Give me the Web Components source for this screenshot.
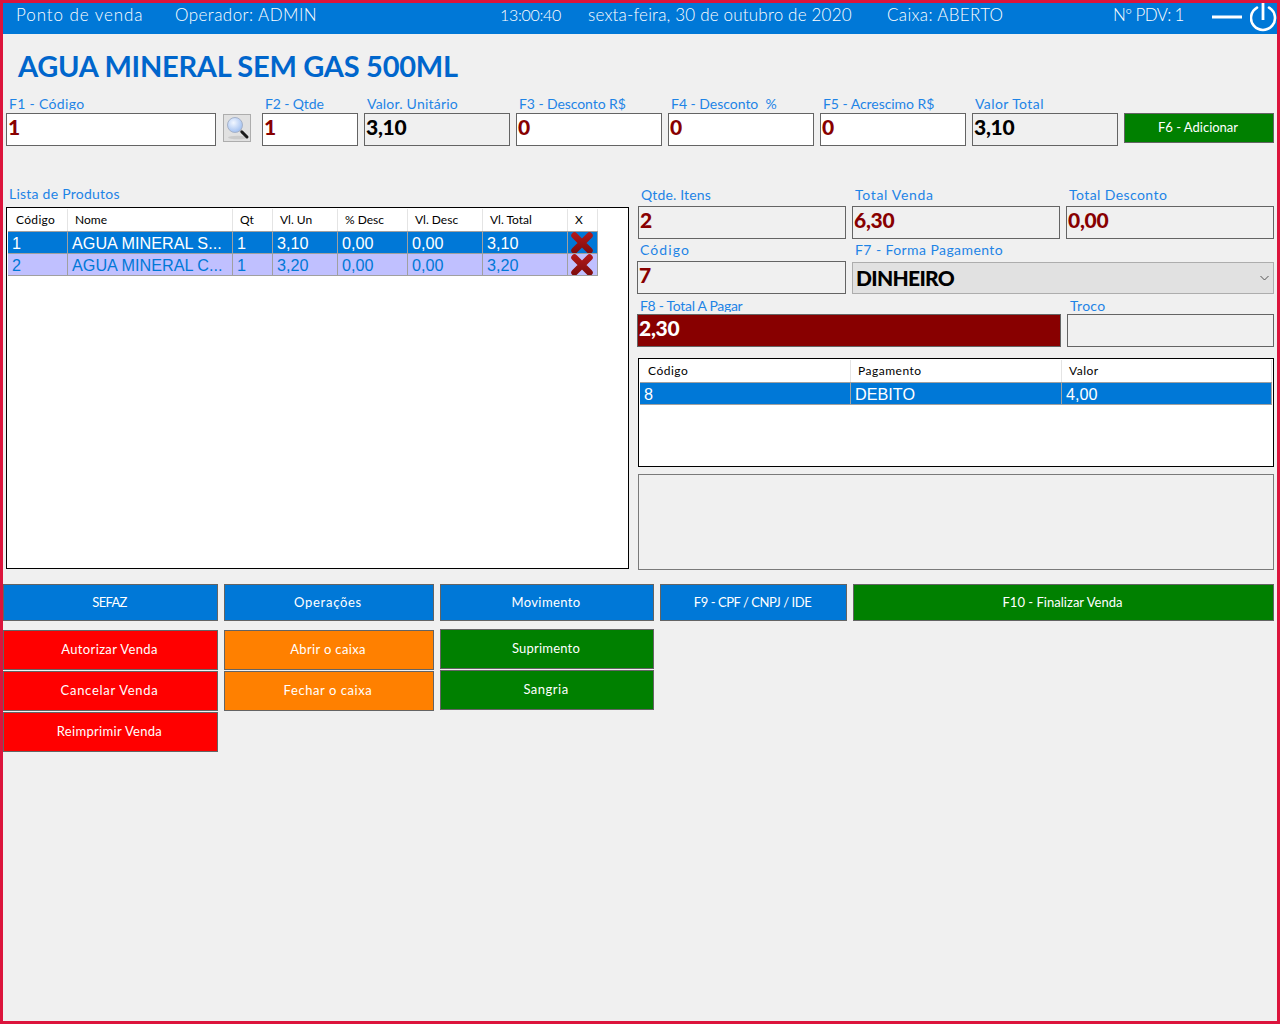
<!DOCTYPE html>
<html lang="pt-BR"><head><meta charset="utf-8"><title>Ponto de venda</title>
<style>
html,body{margin:0;padding:0;background:#fff}
body{font-family:"Lato","Liberation Sans",sans-serif}
</style></head><body>
<pos-app>
  <pos-header slot="header"></pos-header>
  <pos-title>AGUA MINERAL SEM GAS 500ML</pos-title>
  <pos-inputs>
    <pos-field label="F1 - Código" value="1" ls=".33" clip style="width:210px"></pos-field>
    <pos-search></pos-search>
    <pos-field label="F2 - Qtde" value="1" ls="-.13" style="width:96px"></pos-field>
    <pos-field label="Valor. Unitário" value="3,10" ls=".22" tone="ro-black" style="width:146px"></pos-field>
    <pos-field label="F3 - Desconto R$" value="0" ls="-.08" style="width:146px"></pos-field>
    <pos-field label="F4 - Desconto  %" value="0" ls="-.02" style="width:146px"></pos-field>
    <pos-field label="F5 - Acrescimo R$" value="0" ls="-.05" style="width:146px"></pos-field>
    <pos-field label="Valor Total" value="3,10" tone="ro-black" style="width:146px"></pos-field>
    <pos-btn color="#008000" ls="0" style="width:150px;height:30px;margin-top:16px">F6 - Adicionar</pos-btn>
  </pos-inputs>
  <pos-columns>
    <pos-left slot="left">
      <pos-grid cols="60px 165px 40px 65px 70px 75px 85px 30px" rowwidth="590px" style="height:362px;--hls:0px;--h1ls:.33px">
        <pos-row kind="head" cells="Código|Nome|Qt|Vl. Un|% Desc|Vl. Desc|Vl. Total|X"></pos-row>
        <pos-row kind="sel" cells="1|AGUA MINERAL S...|1|3,10|0,00|0,00|3,10|"><pos-x></pos-x></pos-row>
        <pos-row kind="alt" cells="2|AGUA MINERAL C...|1|3,20|0,00|0,00|3,20|"><pos-x></pos-x></pos-row>
      </pos-grid>
    </pos-left>
    <pos-right slot="right">
      <pos-trio>
        <pos-field label="Qtde. Itens" value="2" ls=".15" tone="ro" lh="18"></pos-field>
        <pos-field label="Total Venda" value="6,30" ls=".69" tone="ro" lh="18"></pos-field>
        <pos-field label="Total Desconto" value="0,00" tone="ro" lh="18"></pos-field>
      </pos-trio>
      <pos-pay>
        <pos-field label="Código" value="7" ls="1.09" tone="ro" lh="18" style="width:209px;margin-left:-1px"></pos-field>
        <pos-select label="F7 - Forma Pagamento" value="DINHEIRO"></pos-select>
      </pos-pay>
      <pos-due>
        <pos-field label="F8 - Total A Pagar" value="2,30" ls="-.3" tone="dark" lh="15" clip style="width:424px;margin-left:-1px"></pos-field>
        <pos-field label="Troco" value="" ls=".3" tone="ro" lh="15" style="width:207px"></pos-field>
      </pos-due>
      <pos-grid cols="211px 211px 1fr" rowwidth="100%" style="height:109px;margin-top:11px;--hls:.5px;--h1ls:.5px">
        <pos-row kind="head" cells="Código|Pagamento|Valor"></pos-row>
        <pos-row kind="sel" cells="8|DEBITO|4,00"></pos-row>
      </pos-grid>
      <pos-panel></pos-panel>
    </pos-right>
  </pos-columns>
  <pos-actions>
    <pos-btn color="#0078d7" ls="-.7" style="width:215px">SEFAZ</pos-btn>
    <pos-btn color="#0078d7" ls=".72" style="width:210px">Operações</pos-btn>
    <pos-btn color="#0078d7" ls=".4" style="width:214px">Movimento</pos-btn>
    <pos-btn color="#0078d7" ls="-.45" style="width:187px">F9 - CPF / CNPJ / IDE</pos-btn>
    <pos-btn color="#008000" ls=".02" style="width:421px">F10 - Finalizar Venda</pos-btn>
  </pos-actions>
  <pos-stacks>
    <pos-stack style="width:215px;padding-top:1px">
      <pos-btn color="#ff0000" ls=".37" style="height:40px">Autorizar Venda</pos-btn>
      <pos-btn color="#ff0000" ls=".71" style="height:40px">Cancelar Venda</pos-btn>
      <pos-btn color="#ff0000" ls=".31" style="height:40px">Reimprimir Venda</pos-btn>
    </pos-stack>
    <pos-stack style="width:210px;padding-top:1px">
      <pos-btn color="#ff8000" ls=".35" style="height:40px">Abrir o caixa</pos-btn>
      <pos-btn color="#ff8000" ls=".57" style="height:40px">Fechar o caixa</pos-btn>
    </pos-stack>
    <pos-stack style="width:214px">
      <pos-btn color="#008000" ls=".2" style="height:40px">Suprimento</pos-btn>
      <pos-btn color="#008000" ls=".5" style="height:40px">Sangria</pos-btn>
    </pos-stack>
  </pos-stacks>
</pos-app>
<script>
const FONT='"Lato","Liberation Sans",sans-serif';
function def(name,css,html){
  class C extends HTMLElement{
    constructor(){super();this.attachShadow({mode:'open'});
      this.shadowRoot.innerHTML='<style>'+css+'</style>'+(typeof html==='function'?'':html);}
    connectedCallback(){
      if(typeof html==='function'){this.shadowRoot.innerHTML='<style>'+css+'</style>'+html(this);}
    }
  }
  customElements.define(name,C);
}
const esc=s=>String(s==null?'':s).replace(/&/g,'&amp;').replace(/</g,'&lt;');

def('pos-app',`:host{display:block;width:1280px;height:1024px;box-sizing:border-box;border:3px solid #dc143c;background:#f0f0f0;overflow:hidden;font-family:${FONT}}`,`<slot name="header"></slot><slot></slot>`);

def('pos-header',`:host{display:grid;height:31px;background:#0078d7;color:#fff;font-size:17px;
  grid-template-columns:13px 159px 325px 88px 299px 226px 99px 38px 27px;align-items:center;font-weight:300}
  span{white-space:nowrap;position:relative;top:-4px}
  svg{display:block}
  .m{position:relative;top:-2px}`,
`<i></i><span style="letter-spacing:.92px">Ponto de venda</span><span style="letter-spacing:.45px">Operador: ADMIN</span><span style="letter-spacing:-.3px;font-size:16px">13:00:40</span><span style="letter-spacing:.19px">sexta-feira, 30 de outubro de 2020</span><span style="letter-spacing:.34px">Caixa: ABERTO</span><span style="letter-spacing:-.61px">Nº PDV: 1</span>
<svg class="m" width="30" height="4" viewBox="0 0 30 4"><rect x="0" y="0.5" width="30" height="3" fill="#fff"/></svg>
<svg width="28" height="31" viewBox="0 0 28 31"><path d="M7 4.600A12 12 0 1 0 19 4.600" fill="none" stroke="#fff" stroke-width="2.6" stroke-linecap="round"/><path d="M13 0V17" stroke="#fff" stroke-width="2.8"/></svg>`);

def('pos-title',`:host{display:block;margin-top:14px;height:38px;line-height:36px;padding-left:15px;font-size:29px;font-weight:700;color:#0066cc;white-space:nowrap;letter-spacing:-.27px}`,`<slot></slot>`);

def('pos-inputs',`:host{display:flex;gap:6px;padding-left:3px;margin-top:11px;align-items:flex-start}`,`<slot></slot>`);

def('pos-field',`:host{display:block;box-sizing:border-box}
  label{display:block;white-space:pre;color:#1e84e6;font-size:14px;padding-left:3px}
  :host([clip]) label{overflow:hidden}
  .box{box-sizing:border-box;height:33px;border:1px solid #646464;background:#fff;color:#880000;font-weight:900;font-size:21px;line-height:25px;padding-left:1px;white-space:nowrap;letter-spacing:-.3px}
  :host([tone="ro"]) .box{background:#f0f0f0}
  :host([tone="ro-black"]) .box{background:#f0f0f0;color:#000}
  :host([tone="dark"]) .box{background:#880000;color:#fff}`,
 el=>{const lh=+(el.getAttribute('lh')||16);const ls=el.getAttribute('ls')||'.42';
   const st={16:'height:13px;margin-bottom:3px;line-height:13px',18:'height:18px;line-height:13px',15:'height:13px;margin-bottom:2px;line-height:14px'}[lh];
   return `<label style="${st};letter-spacing:${ls}px">${esc(el.getAttribute('label'))}</label><div class="box">${esc(el.getAttribute('value'))}</div>`});

def('pos-search',`:host{display:block;width:28px;height:28px;box-sizing:border-box;margin:17px 5px 0 1px;border:1px solid #adadad;background:#e1e1e1}svg{display:block}`,
`<svg width="26" height="26" viewBox="0 0 26 26"><defs><radialGradient id="g" cx=".4" cy=".35" r=".7"><stop offset="0" stop-color="#f2f7ff"/><stop offset="1" stop-color="#9dbdf0"/></radialGradient></defs>
<ellipse cx="14" cy="22.500" rx="10" ry="1.800" fill="#cbcbcb"/><circle cx="11" cy="10" r="7.500" fill="url(#g)" stroke="#a6b2c8" stroke-width="1"/><path d="M16.500 15.500L18.500 17.500" stroke="#8a8a8a" stroke-width="2.500"/><path d="M18 17L23 22" stroke="#1c1c1c" stroke-width="3" stroke-linecap="round"/></svg>`);

def('pos-btn',`:host{display:flex;box-sizing:border-box;height:37px;border:1px solid #646464;align-items:center;justify-content:center;color:#fff;font-size:13px;white-space:nowrap;font-family:${FONT};padding:0 2px 2px 0}`,
 el=>{el.style.background=el.getAttribute('color');el.style.letterSpacing=(el.getAttribute('ls')||'.5')+'px';return `<slot></slot>`});

def('pos-columns',`:host{display:grid;grid-template-columns:623px 636px;column-gap:9px;padding-left:3px;margin-top:41px}`,`<slot name="left"></slot><slot name="right"></slot>`);

def('pos-left',`:host{display:block}
  div{height:20px;line-height:14px;padding-left:3px;color:#1e84e6;font-size:14px;letter-spacing:.24px}`,`<div>Lista de Produtos</div><slot></slot>`);

def('pos-right',`:host{display:flex;flex-direction:column;padding-top:1px}`,`<slot></slot>`);
def('pos-trio',`:host{display:grid;grid-template-columns:208px 208px 208px;gap:6px}`,`<slot></slot>`);
def('pos-pay',`:host{display:flex;gap:6px;margin-top:4px}`,`<slot></slot>`);
def('pos-due',`:host{display:flex;gap:6px;margin-top:5px}`,`<slot></slot>`);
def('pos-panel',`:host{display:block;height:96px;margin-top:7px;box-sizing:border-box;border:1px solid #7a7a7a;background:#f0f0f0}`,``);

def('pos-select',`:host{display:block;width:422px}
  label{display:block;height:18px;line-height:13px;color:#1e84e6;font-size:14px;letter-spacing:.42px;padding-left:3px}
  .box{box-sizing:border-box;margin-top:1px;height:32px;border:1px solid #adadad;background:#e1e1e1;display:flex;align-items:center;justify-content:space-between;padding:0 4px 2px 3px;color:#000;font-weight:900;font-size:21px;letter-spacing:-.7px}
  svg{display:block;position:relative;top:1px}`,
 el=>`<label>${esc(el.getAttribute('label'))}</label><div class="box"><span>${esc(el.getAttribute('value'))}</span><svg width="9" height="6" viewBox="0 0 9 6"><path d="M.5 1L4.500 5L8.500 1" fill="none" stroke="#555" stroke-width="1"/></svg></div>`);

def('pos-grid',`:host{display:block;box-sizing:border-box;border:1px solid #000;background:#fff;padding:1px}
  .w{width:var(--rw)}`,
 el=>{el.style.setProperty('--cols',el.getAttribute('cols'));el.style.setProperty('--rw',el.getAttribute('rowwidth'));return `<div class="w"><slot></slot></div>`});

def('pos-row',`:host{display:grid;grid-template-columns:var(--cols);box-sizing:border-box}
  div{box-sizing:border-box;white-space:nowrap;overflow:hidden}
  :host([kind="head"]){height:22px;background:#fff;color:#000;font-size:12px;letter-spacing:var(--hls)}
  :host([kind="head"]) div{border-right:1px solid #e4e4e4;line-height:21px;padding-left:7px}
  :host([kind="head"]) div:first-of-type{padding-left:8px;letter-spacing:var(--h1ls)}
  :host([kind="sel"]),:host([kind="alt"]){height:22px;font-family:"Liberation Sans",sans-serif;font-size:16.2px;border-top:1px solid #a0a0a0}
  :host([kind="sel"]) div,:host([kind="alt"]) div{border-right:1px solid #a0a0a0;line-height:22px;padding-left:4px;border-bottom:1px solid #a0a0a0;margin-bottom:-1px;height:22px}
  :host([kind="sel"]){background:#0078d7;color:#fff}
  :host([kind="alt"]){background:#c0c0ff;color:#0078d7}
  .slot{padding:0!important;display:flex;align-items:center;justify-content:center}`,
 el=>{const c=(el.getAttribute('cells')||'').split('|');return c.map(t=>t===''?`<div class="slot"><slot></slot></div>`:`<div>${esc(t)}</div>`).join('')});

def('pos-x',`:host{display:block;width:26px;height:22px;margin-right:2px}svg{display:block}`,
`<svg width="26" height="22" viewBox="0 0 26 22"><defs><linearGradient id="r" gradientUnits="userSpaceOnUse" x1="0" y1="0" x2="0" y2="22"><stop offset="0" stop-color="#b51a1a"/><stop offset="1" stop-color="#7c0c0c"/></linearGradient></defs>
<path d="M5.500 3.500L20.500 18.500M20.500 3.500L5.500 18.500" fill="none" stroke="url(#r)" stroke-width="6.500" stroke-linecap="round"/></svg>`);

def('pos-actions',`:host{display:flex;gap:6px;margin-top:14px}`,`<slot></slot>`);
def('pos-stacks',`:host{display:flex;gap:6px;margin-top:8px;align-items:flex-start}`,`<slot></slot>`);
def('pos-stack',`:host{display:flex;flex-direction:column;gap:1px}`,`<slot></slot>`);
</script>
</body></html>
